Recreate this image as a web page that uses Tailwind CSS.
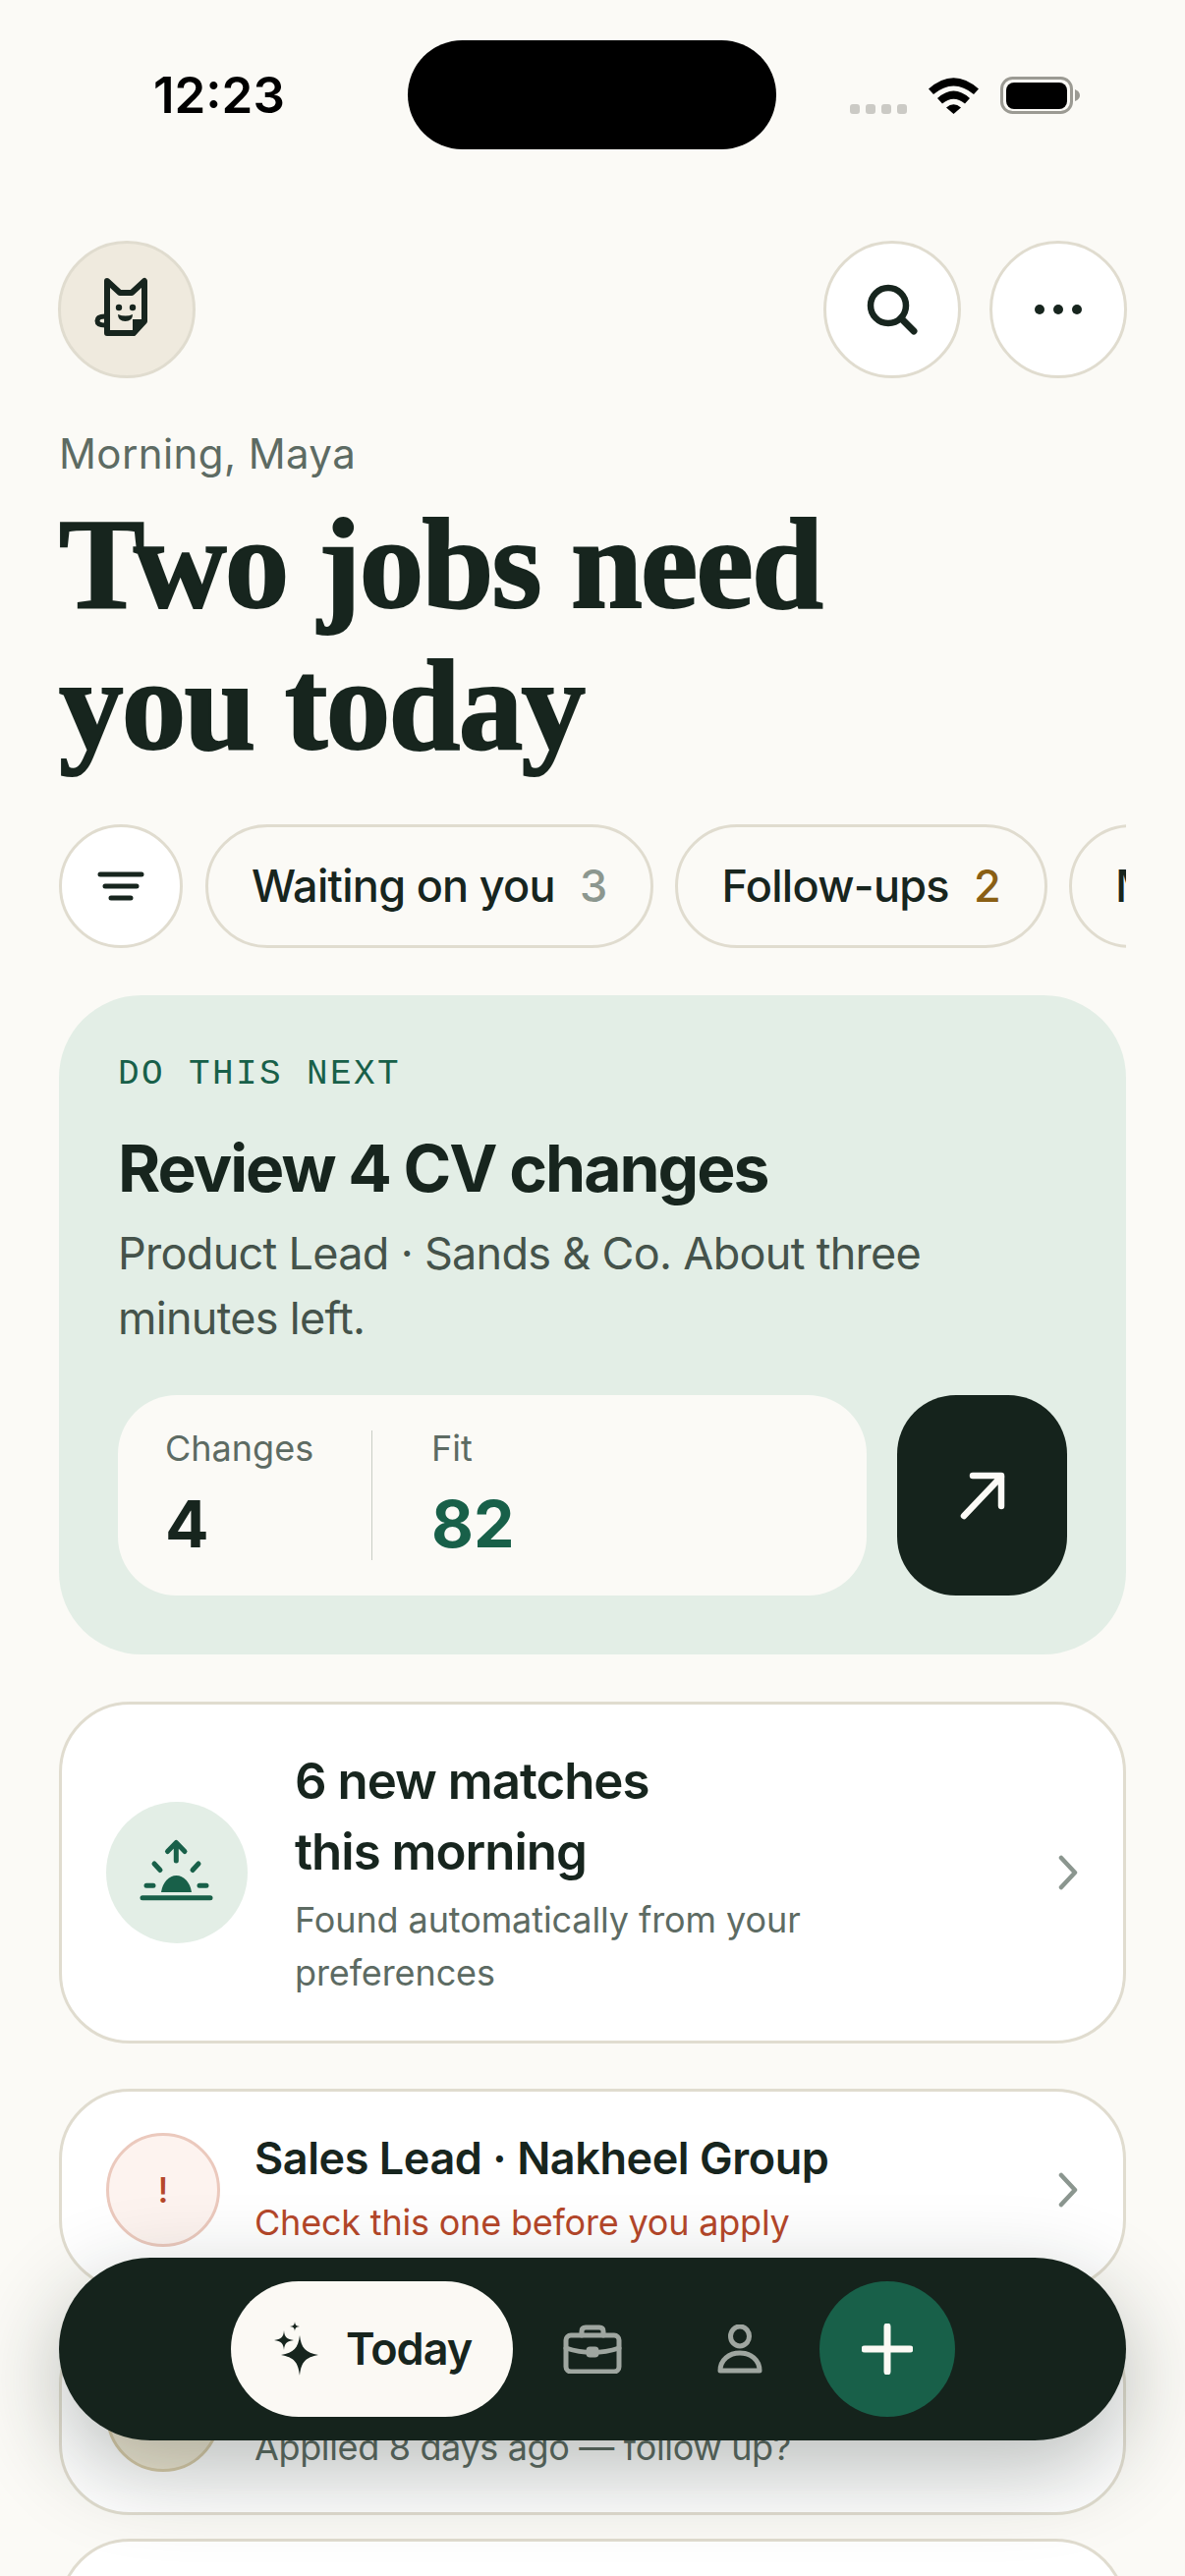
<!DOCTYPE html>
<html lang="en">
<head>
  <meta charset="UTF-8">
  <title>Today</title>
  <script src="https://cdn.jsdelivr.net/npm/@tailwindcss/browser@4"></script>
</head>
<body class="bg-[#fbfaf6] font-['Inter',sans-serif] text-[#17251e]">
<div class="relative w-[1206px] h-[2622px] overflow-hidden bg-[#fbfaf6]">

  <!-- status bar -->
  <div class="relative h-[245px]">
    <div class="absolute left-[415px] top-[41px] w-[375px] h-[111px] rounded-full bg-black"></div>
    <div class="absolute left-[156px] top-[66px] text-[51px] leading-[62px] font-semibold text-black">12:23</div>
    <svg class="absolute left-[860px] top-[70px]" width="246" height="56" viewBox="0 0 246 56">
      <g fill="#cbcac5"><rect x="5" y="36" width="10" height="10" rx="3"/><rect x="21" y="36" width="10" height="10" rx="3"/><rect x="37" y="36" width="10" height="10" rx="3"/><rect x="53" y="36" width="10" height="10" rx="3"/></g>
      <path d="M85 20.500Q110.500 -2 136 20.500L131 26Q110.500 9 90 26Z" fill="#000"/>
      <path d="M94 30Q110.500 15 127 30L122 35.500Q110.500 26 99 35.500Z" fill="#000"/>
      <path d="M103 39.500Q110.500 33 118 39.500L110.500 46Z" fill="#000"/>
      <rect x="159.500" y="9.500" width="71" height="35" rx="11" fill="none" stroke="#9b9a93" stroke-width="3"/>
      <rect x="164" y="14" width="62" height="27" rx="8" fill="#000"/>
      <path d="M234 21Q239 23 239 27Q239 31 234 33Z" fill="#9b9a93"/>
    </svg>
  </div>

  <main class="px-[60px]">
    <!-- top buttons -->
    <header class="flex justify-between -mr-[1px] -ml-[1px]">
      <div class="w-[140px] h-[140px] rounded-full bg-[#efeade] border-[3px] border-[#e0dccf] flex items-center justify-center">
        <svg width="140" height="140" viewBox="0 0 140 140" class="shrink-0">
          <path d="M50 41L63 53H75L88 41V82L77 94H50Z" fill="none" stroke="#17251e" stroke-width="6" stroke-linejoin="round"/>
          <path d="M76 80H88V83L78 97H76Z" fill="#17251e"/>
          <circle cx="62" cy="68" r="3.200" fill="#17251e"/>
          <circle cx="76" cy="68" r="3.200" fill="#17251e"/>
          <path d="M61 75Q69 78 76 75Q76 82 68.500 82Q61 82 61 75Z" fill="#17251e"/>
          <path d="M48 77Q40 77 40 81.500Q40 86 48 86" fill="none" stroke="#17251e" stroke-width="5"/>
        </svg>
      </div>
      <div class="flex gap-[29px]">
        <button class="w-[140px] h-[140px] rounded-full bg-white border-[3px] border-[#e0dccf] flex items-center justify-center">
          <svg width="60" height="60" viewBox="0 0 60 60"><circle cx="26" cy="26" r="18" fill="none" stroke="#17251e" stroke-width="6.500"/><path d="M39 39L52 52" stroke="#17251e" stroke-width="7" stroke-linecap="round"/></svg>
        </button>
        <button class="w-[140px] h-[140px] rounded-full bg-white border-[3px] border-[#e0dccf] flex items-center justify-center">
          <svg width="60" height="20" viewBox="0 0 60 20" fill="#17251e"><circle cx="11" cy="10" r="5"/><circle cx="30" cy="10" r="5"/><circle cx="49" cy="10" r="5"/></svg>
        </button>
      </div>
    </header>

    <p class="mt-[47px] text-[42px] leading-[60px] tracking-[0.4px] text-[#5d6b63]">Morning, Maya</p>
    <h1 class="mt-[10px] font-['Liberation_Serif',serif] font-bold text-[131px] leading-[144px] tracking-[-1.700px] [-webkit-text-stroke:2px_#17251e]">Two jobs need<br>you today</h1>

    <!-- filters -->
    <div class="mt-[49px] flex gap-[22px] overflow-hidden">
      <button class="shrink-0 w-[126px] h-[126px] mr-[1px] rounded-full bg-white border-[3px] border-[#e0dccf] flex items-center justify-center">
        <svg width="50" height="34" viewBox="0 0 50 34" stroke="#17251e" stroke-width="5" stroke-linecap="round"><path d="M4 5H46M9 17H41M15 29H35"/></svg>
      </button>
      <div class="shrink-0 h-[126px] rounded-full border-[3px] border-[#e0dccf] pl-[44px] pr-[45px] flex items-center gap-[25px] text-[45px] tracking-[-0.7px] font-medium">
        <span>Waiting on you</span><span class="text-[#8c978f]">3</span>
      </div>
      <div class="shrink-0 h-[126px] rounded-full border-[3px] border-[#e0dccf] pl-[44px] pr-[45px] flex items-center gap-[25px] text-[45px] tracking-[-0.7px] font-medium">
        <span>Follow-ups</span><span class="text-[#8a5f14]">2</span>
      </div>
      <div class="shrink-0 h-[126px] rounded-full border-[3px] border-[#e0dccf] pl-[44px] pr-[45px] flex items-center gap-[25px] text-[45px] tracking-[-0.7px] font-medium">
        <span>Matches</span><span class="text-[#8c978f]">6</span>
      </div>
    </div>

    <!-- next action -->
    <section class="mt-[48px] h-[671px] rounded-[84px] bg-[#e3eee6] px-[60px] pt-[60px]">
      <p class="font-['Liberation_Mono',monospace] text-[36px] leading-[42px] tracking-[2.400px] text-[#186049]">DO THIS NEXT</p>
      <h2 class="mt-[32px] text-[66px] leading-[84px] font-bold tracking-[-2px]">Review 4 CV changes</h2>
      <p class="mt-[12px] text-[45px] leading-[66px] tracking-[-0.7px] text-[#45534b]">Product Lead · Sands &amp; Co. About three<br>minutes left.</p>
      <div class="mt-[45px] flex gap-[31px]">
        <div class="w-[762px] h-[204px] rounded-[60px] bg-[#fbfaf6] flex items-center pl-[48px]">
          <div class="w-[211px] h-[132px] border-r-[1.500px] border-[#c9cdc5]">
            <p class="text-[36px] leading-[36px] text-[#5d6b63]">Changes</p>
            <p class="mt-[21px] text-[66px] leading-[76px] font-bold">4</p>
          </div>
          <div class="pl-[60px] h-[132px]">
            <p class="text-[36px] leading-[36px] text-[#5d6b63]">Fit</p>
            <p class="mt-[21px] text-[66px] leading-[76px] font-bold text-[#186049]">82</p>
          </div>
        </div>
        <button class="w-[173px] h-[204px] rounded-[60px] bg-[#15231c] flex items-center justify-center">
          <svg width="60" height="60" viewBox="0 0 60 60" fill="none" stroke="#fbfaf6" stroke-width="6.500" stroke-linecap="round" stroke-linejoin="round"><path d="M11 51L49 11M20 10H49V41"/></svg>
        </button>
      </div>
    </section>

    <!-- matches -->
    <section class="mt-[48px] h-[348px] rounded-[72px] bg-white border-[3px] border-[#e0dccf] flex items-center pl-[45px] pr-[45px]">
      <div class="shrink-0 w-[144px] h-[144px] rounded-full bg-[#e3eee6]">
        <svg width="144" height="144" viewBox="0 0 144 144" fill="none" stroke="#186049" stroke-width="5" stroke-linecap="round" stroke-linejoin="round">
          <path d="M37 97.700H106"/>
          <path d="M56 92A15.800 21 0 0 1 87 92Z" fill="#186049" stroke="none"/>
          <path d="M41 85.300H48M95 85.300H102M49 63L55 69.500M94 63L88 69.500M71.300 60V42M62.500 50.500L71.300 41.500L80 50.500"/>
        </svg>
      </div>
      <div class="ml-[48px] flex-1">
        <p class="text-[51px] leading-[72px] tracking-[-1px] font-semibold">6 new matches<br>this morning</p>
        <p class="mt-[6px] text-[36px] leading-[54px] tracking-[-0.1px] text-[#5d6b63]">Found automatically from your<br>preferences</p>
      </div>
      <svg width="24" height="36" viewBox="0 0 24 36" fill="none" stroke="#8b968f" stroke-width="4.500" stroke-linecap="round" stroke-linejoin="round" class="-mr-[1px]"><path d="M5 3L19 18L5 33"/></svg>
    </section>

    <!-- jobs -->
    <section class="mt-[46px] h-[205px] rounded-[72px] bg-white border-[3px] border-[#e0dccf] flex items-center pl-[45px] pr-[45px]">
      <div class="shrink-0 w-[116px] h-[116px] rounded-full bg-[#fdf3ef] border-[3px] border-[#ebc9bd] flex items-center justify-center text-[36px] font-medium text-[#b5472a]">!</div>
      <div class="ml-[35px] flex-1">
        <p class="text-[45px] leading-[60px] tracking-[-0.450px] font-semibold">Sales Lead · Nakheel Group</p>
        <p class="mt-[7px] text-[36px] leading-[56px] tracking-[-0.2px] text-[#b5472a]">Check this one before you apply</p>
      </div>
      <svg width="24" height="36" viewBox="0 0 24 36" fill="none" stroke="#8b968f" stroke-width="4.500" stroke-linecap="round" stroke-linejoin="round" class="-mr-[1px]"><path d="M5 3L19 18L5 33"/></svg>
    </section>

    <section class="mt-[24px] h-[205px] rounded-[72px] bg-white border-[3px] border-[#e0dccf] flex items-center pl-[45px] pr-[45px]">
      <div class="shrink-0 w-[116px] h-[116px] rounded-full bg-[#efe8d4] border-[3px] border-[#d9ccaa]"></div>
      <div class="ml-[35px] flex-1">
        <p class="text-[45px] leading-[60px] tracking-[-0.450px] font-semibold">Ops Manager · Tamkeen</p>
        <p class="mt-[7px] text-[36px] leading-[56px] tracking-[-0.35px] text-[#5d6b63]">Applied 8 days ago — follow up?</p>
      </div>
    </section>

    <section class="mt-[24px] h-[205px] rounded-[72px] bg-white border-[3px] border-[#e0dccf]"></section>
  </main>

  <!-- tab bar, floats over the list -->
  <nav class="absolute left-[60px] top-[2298px] w-[1086px] h-[186px] rounded-full bg-[#15231c] shadow-[0_30px_90px_rgba(23,37,30,0.3)] flex items-center pl-[175px]">
    <div class="w-[287px] h-[138px] rounded-full bg-[#fbf9f4] flex items-center pl-[44px] gap-[25px] text-[45px] tracking-[-1px] font-semibold">
      <svg width="48" height="56" viewBox="0 0 48 56" fill="#17251e" class="shrink-0">
        <path d="M26 14C27.500 27 32 31.500 45 34C32 36.500 27.500 41 26 55C24.500 41 20 36.500 7 34C20 31.500 24.500 27 26 14Z"/>
        <path d="M10 9C10.500 16 13 18 20 19C13 20 10.500 22 10 29C9.500 22 7 20 0 19C7 18 9.500 16 10 9Z"/>
        <path d="M21 0C21.300 3.500 22.500 4.700 26 5C22.500 5.300 21.300 6.500 21 10C20.700 6.500 19.500 5.300 16 5C19.500 4.700 20.700 3.500 21 0Z"/>
      </svg>
      <span>Today</span>
    </div>
    <svg width="60" height="50" viewBox="0 0 60 50" fill="none" stroke="#9fa6a0" stroke-width="5" stroke-linejoin="round" stroke-linecap="round" class="ml-[51px] shrink-0">
      <rect x="3" y="11" width="54" height="37" rx="5"/>
      <path d="M19 11V7Q19 3 23 3H37Q41 3 41 7V11"/>
      <path d="M3 24Q30 33 57 24"/>
      <rect x="26" y="25" width="8" height="6" rx="1.500" fill="#9fa6a0"/>
    </svg>
    <svg width="46" height="50" viewBox="0 0 46 50" fill="none" stroke="#9fa6a0" stroke-width="5" stroke-linejoin="round" class="ml-[97px] shrink-0">
      <ellipse cx="23" cy="12" rx="9.500" ry="10"/>
      <path d="M3 47C3 36 12 29 23 29C34 29 43 36 43 47Z"/>
    </svg>
    <button class="ml-[58px] w-[138px] h-[138px] rounded-full bg-[#186049] flex items-center justify-center">
      <svg width="52" height="52" viewBox="0 0 52 52" stroke="#fbf9f4" stroke-width="7" stroke-linecap="round"><path d="M26 3V49M3 26H49"/></svg>
    </button>
  </nav>
</div>
</body>
</html>
